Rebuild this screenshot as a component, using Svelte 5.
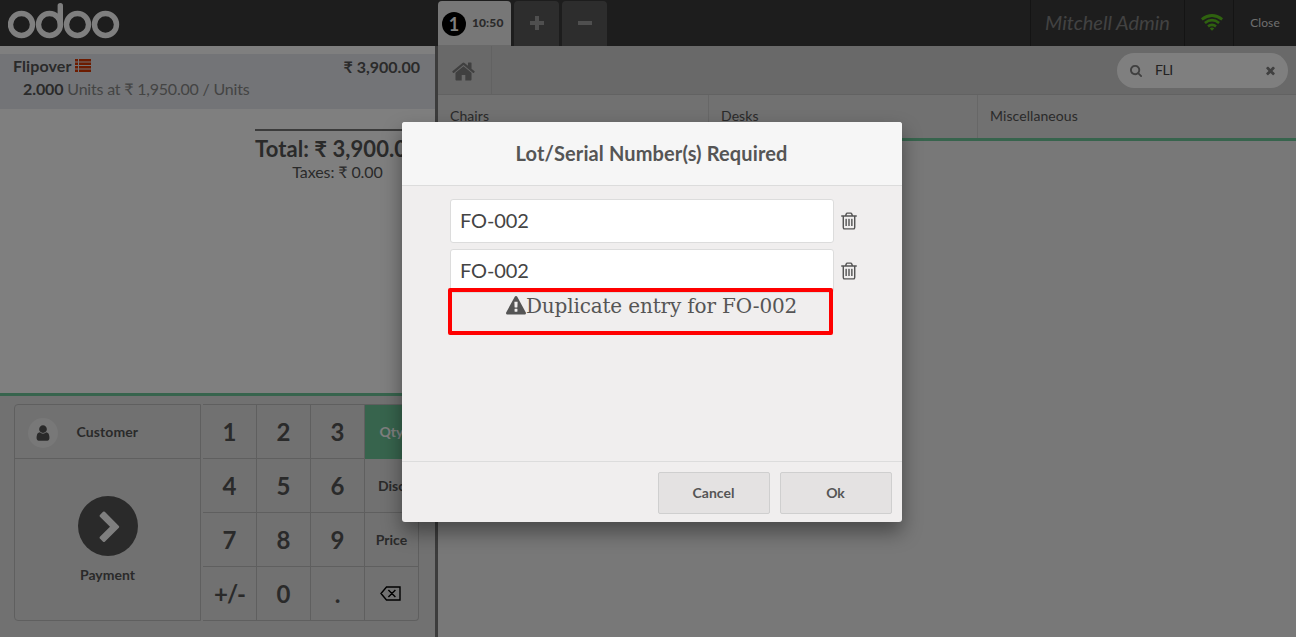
<script>
  const keys = ['1', '2', '3', 'Qty', '4', '5', '6', 'Disc', '7', '8', '9', 'Price', '+/-', '0', '.', 'del'];
  const modes = ['Qty', 'Disc', 'Price'];
  const lots = ['FO-002', 'FO-002'];
  const categories = ['Chairs', 'Desks', 'Miscellaneous'];
</script>

{#snippet trash()}
  <svg class="trash" viewBox="0 0 1792 1792"><path d="M704 736v576q0 14-9 23t-23 9h-64q-14 0-23-9t-9-23v-576q0-14 9-23t23-9h64q14 0 23 9t9 23zm256 0v576q0 14-9 23t-23 9h-64q-14 0-23-9t-9-23v-576q0-14 9-23t23-9h64q14 0 23 9t9 23zm256 0v576q0 14-9 23t-23 9h-64q-14 0-23-9t-9-23v-576q0-14 9-23t23-9h64q14 0 23 9t9 23zm128 724v-948h-896v948q0 22 7 40.5t14.5 27 10.5 8.5h832q3 0 10.5-8.5t14.5-27 7-40.5zm-672-1076h448l-48-117q-7-9-17-11h-317q-10 2-17 11zm928 32v64q0 14-9 23t-23 9h-96v948q0 83-47 143.5t-113 60.5h-832q-66 0-113-58.5t-47-141.5v-952h-96q-14 0-23-9t-9-23v-64q0-14 9-23t23-9h309l70-167q15-37 54-63t79-26h320q40 0 79 26t54 63l70 167h309q14 0 23 9t9 23z" /></svg>
{/snippet}

<div class="pos">
  <header class="topbar">
    <div class="brand">
      <svg class="logo" viewBox="0 0 112 36" fill="none" stroke="#fff" stroke-width="5.4">
        <circle cx="13.5" cy="21.5" r="11" />
        <circle cx="41.5" cy="21.5" r="11" />
        <circle cx="69.5" cy="21.5" r="11" />
        <circle cx="97.5" cy="21.5" r="11" />
        <path d="M52.3 21.5V2.8" stroke-linecap="round" />
      </svg>
    </div>
    <div class="tabs">
      <div class="tab current"><span class="seq">1</span><span class="time">10:50</span></div>
      <div class="tab"><svg width="14" height="14"><path d="M5 0h4v5h5v4h-5v5h-4v-5h-5v-4h5z" /></svg></div>
      <div class="tab"><svg width="14" height="14"><path d="M0 5h14v4h-14z" /></svg></div>
    </div>
    <div class="user">Mitchell Admin</div>
    <div class="wifi">
      <svg width="24" height="18" viewBox="0 0 24 18" fill="none" stroke="#5ec41f" stroke-width="2.7">
        <path d="M1.8 5.4Q12-2.4 22.2 5.4M4.9 9Q12 3.4 19.1 9M8 12.4Q12 9.4 16 12.4" />
        <path d="M9.8 14.4Q12 12.8 14.2 14.4L12 16.8z" fill="#5ec41f" stroke="none" />
      </svg>
    </div>
    <div class="close">Close</div>
  </header>

  <div class="main">
    <section class="left">
      <div class="order">
        <div class="line">
          <div class="line-top">
            <b class="product">Flipover<svg width="16" height="13"><path d="M0 0h3v2.5H0zM4 0h12v2.5H4zM0 3.5h3V6H0zM4 3.5h12V6H4zM0 7h3v2.5H0zM4 7h12v2.5H4zM0 10.5h3V13H0zM4 10.5h12V13H4z" /></svg></b>
            <b>₹ 3,900.00</b>
          </div>
          <div class="info"><b>2.000</b> Units at ₹ 1,950.00 / Units</div>
        </div>
        <div class="summary">
          <div class="total">Total: ₹ 3,900.00</div>
          <div class="taxes">Taxes: ₹ 0.00</div>
        </div>
      </div>
      <div class="pads">
        <div class="actions">
          <div class="customer">
            <span class="avatar"><svg width="18" height="18" viewBox="0 0 1792 1792"><path d="M1536 1399q0 109-62.5 187t-150.5 78h-854q-88 0-150.5-78t-62.5-187q0-85 8.5-160.5t31.5-152 58.5-131 94-89 134.5-34.5q131 128 313 128t313-128q76 0 134.5 34.5t94 89 58.5 131 31.5 152 8.5 160.5zm-256-887q0 159-112.5 271.5t-271.5 112.5-271.5-112.5-112.5-271.5 112.5-271.5 271.5-112.5 271.5 112.5 112.5 271.5z" /></svg></span>
            <span class="label">Customer</span>
          </div>
          <div class="payment">
            <span class="go"><svg width="34" height="34" viewBox="0 0 1792 1792"><path d="M1363 877l-742 742q-19 19-45 19t-45-19l-166-166q-19-19-19-45t19-45l531-531-531-531q-19-19-19-45t19-45l166-166q19-19 45-19t45 19l742 742q19 19 19 45t-19 45z" /></svg></span>
            <span>Payment</span>
          </div>
        </div>
        <div class="numpad">
          {#each keys as key}
            <div class="key" class:mode={modes.includes(key)} class:active={key === 'Qty'} class:sign={key === '+/-'}>
              {#if key === 'del'}
                <svg width="21" height="15" viewBox="0 0 21 15" fill="none" stroke="#000" stroke-width="1.4"><path d="M6.5 1H20v13H6.5L1 7.5zM8.4 4l7 7M15.4 4l-7 7" /></svg>
              {:else}{key}{/if}
            </div>
          {/each}
        </div>
      </div>
    </section>

    <section class="right">
      <div class="tools">
        <div class="home"><svg width="25" height="25" viewBox="0 0 1792 1792"><path d="M1472 992v480q0 26-19 45t-45 19h-384v-384h-256v384h-384q-26 0-45-19t-19-45v-480q0-1 .5-3t.5-3l575-474 575 474q1 2 1 6zm223-69l-62 74q-8 9-21 11h-3q-13 0-21-7l-692-577-692 577q-12 8-24 7-13-2-21-11l-62-74q-8-10-7-23.5t11-21.5l719-599q32-26 76-26t76 26l244 204v-195q0-14 9-23t23-9h192q14 0 23 9t9 23v408l219 182q10 8 11 21.5t-7 23.5z" /></svg></div>
        <div class="search">
          <svg width="13" height="13" viewBox="0 0 1792 1792"><path d="M1152 832q0-185-131.5-316.5t-316.5-131.5-316.5 131.5-131.5 316.5 131.5 316.5 316.5 131.5 316.5-131.5 131.5-316.5zm512 832q0 52-38 90t-90 38q-54 0-90-38l-343-342q-179 124-399 124-143 0-273.5-55.5t-225-150-150-225-55.5-273.5 55.5-273.5 150-225 225-150 273.5-55.5 273.5 55.5 225 150 150 225 55.5 273.5q0 220-124 399l343 343q37 37 37 90z" /></svg>
          <span>FLI</span>
          <svg width="13" height="13" viewBox="0 0 1792 1792"><path d="M1490 1322q0 40-28 68l-136 136q-28 28-68 28t-68-28l-294-294-294 294q-28 28-68 28t-68-28l-136-136q-28-28-28-68t28-68l294-294-294-294q-28-28-28-68t28-68l136-136q28-28 68-28t68 28l294 294 294-294q28-28 68-28t68 28l136 136q28 28 28 68t-28 68l-294 294 294 294q28 28 28 68z" /></svg>
        </div>
      </div>
      <div class="categories">
        {#each categories as name}<div class="category">{name}</div>{/each}
      </div>
    </section>
  </div>

  <div class="overlay">
    <div class="popup">
      <div class="title">Lot/Serial Number(s) Required</div>
      <div class="body">
        {#each lots as lot}
          <div class="lot"><div class="field">{lot}</div>{@render trash()}</div>
        {/each}
        <div class="warning">
          <svg width="20" height="20" viewBox="0 0 1792 1792"><path d="M1024 1375v-190q0-14-9.5-23.5t-22.5-9.5h-192q-13 0-22.5 9.5t-9.5 23.5v190q0 14 9.5 23.5t22.5 9.5h192q13 0 22.5-9.5t9.5-23.5zm-2-374l18-459q0-12-10-19-13-11-24-11h-220q-11 0-24 11-10 7-10 21l17 457q0 10 10 16.5t24 6.5h185q14 0 23.5-6.5t10.5-16.5zm-14-934l768 1408q35 63-2 126-17 29-46.5 46t-63.5 17h-1536q-34 0-63.5-17t-46.5-46q-37-63-2-126l768-1408q17-31 47-49t65-18 65 18 47 49z" /></svg>Duplicate entry for FO-002
        </div>
        <div class="highlight"></div>
      </div>
      <div class="footer"><div class="button">Cancel</div><div class="button">Ok</div></div>
    </div>
  </div>
</div>

<style>
  .pos, .pos * { box-sizing: border-box; }
  .pos {
    position: relative; display: flex; flex-direction: column;
    width: 100%; height: 100vh; overflow: hidden;
    font-family: Lato, "Noto Sans", sans-serif; font-size: 16px; color: #555; background: #f0eeee;
  }
  svg { display: block; fill: currentColor; }
  svg[fill="none"] { fill: none; }
  .topbar { display: flex; height: 46px; flex: none; background: #3a3a3a; }
  .brand { width: 438px; padding: 3px 8px; }
  .logo { width: 112px; height: 36px; }
  .tabs { display: flex; flex: 1; gap: 3px; padding-top: 1px; }
  .tab {
    display: flex; align-items: center; justify-content: center; width: 45px; height: 45px;
    border-radius: 4px 4px 0 0; background: #5b5b5b; color: #9e9e9e;
  }
  .tab svg { margin-top: -1px; }
  .tab.current { width: 73px; justify-content: flex-start; padding-left: 4px; background: #eee; color: #555; border-bottom: 1px solid #d3d3d3; }
  .seq { width: 24px; height: 24px; margin-top: 2px; border-radius: 50%; background: #000; color: #fff; font-size: 18px; line-height: 24px; font-weight: 700; text-align: center; }
  .time { margin-left: 6px; font-size: 12px; line-height: 16px; font-weight: 900; letter-spacing: .1px; }
  .user, .wifi, .close { display: flex; align-items: center; justify-content: center; border-left: 1px solid #282828; }
  .user { width: 154px; font-size: 20px; line-height: 24px; padding-bottom: 2px; font-style: italic; color: #858585; }
  .wifi { width: 49px; padding: 0 0 0 5px; }
  .close { width: 63px; padding-bottom: 1px; font-size: 12px; letter-spacing: .1px; color: #ddd; }

  .main { display: flex; flex: 1; min-height: 0; }
  .left { display: flex; flex-direction: column; width: 438px; border-right: 3px solid #797979; }
  .order { flex: 1; padding-top: 8px; background: #fff; }
  .line { height: 55px; padding: 2px 15px 0 13px; background: #e6e8ee; }
  .line-top { display: flex; justify-content: space-between; line-height: 20px; }
  .line-top b + b { padding-top: 1px; }
  .product { display: flex; letter-spacing: .1px; }
  .product svg { margin: 3px 0 0 3px; color: #d93600; }
  .info { padding: 2px 0 0 10px; line-height: 20px; letter-spacing: -.2px; color: #888; }
  .info b { color: #555; letter-spacing: -.1px; }
  .summary { width: 165px; margin: 20px 15px 0 auto; border-top: 2px solid #777; text-align: center; }
  .total { white-space: nowrap; padding-top: 4px; font-size: 22px; line-height: 28px; font-weight: 700; letter-spacing: .06px; }
  .taxes { margin-top: -1px; line-height: 20px; letter-spacing: -.1px; }
  .pads { display: flex; gap: 2px; height: 244px; flex: none; padding: 8px 0 0 14px; border-top: 3px solid #6ec89b; background: #e2e2e2; }
  .actions { width: 187px; height: 217px; border: 1px solid #bfbfbf; border-radius: 4px 0 0 4px; font-size: 14px; font-weight: 700; }
  .customer { display: flex; align-items: center; height: 54px; padding-left: 13px; border-bottom: 1px solid #bfbfbf; }
  .avatar { display: flex; align-items: center; justify-content: center; width: 30px; height: 30px; margin-top: 3px; border-radius: 50%; background: #f0f0f0; }
  .label { margin-left: 18.5px; letter-spacing: .1px; }
  .payment { display: flex; flex-direction: column; align-items: center; padding-top: 37px; }
  .go { display: flex; align-items: center; justify-content: center; width: 60px; height: 60px; margin-bottom: 10px; border-radius: 50%; background: #555; color: #fff; padding: 4px 0 0 4px; }
  .numpad { display: grid; grid-template-columns: repeat(4, 54px); grid-auto-rows: 54px; height: 217px; border-top: 1px solid #bfbfbf; border-radius: 0 0 4px 0; }
  .key { display: flex; align-items: center; justify-content: center; border-right: 1px solid #bfbfbf; border-bottom: 1px solid #bfbfbf; font-size: 24px; font-weight: 700; }
  .key:last-child { border-bottom-right-radius: 4px; padding-right: 2px; }
  .key.mode { font-size: 14px; }
  .key.sign { letter-spacing: -1px; }
  .key.active { background: #6ec89b; border-color: #6ec89b; color: #fff; }

  .right { flex: 1; background: #f1f1f1; }
  .tools { display: flex; align-items: center; justify-content: space-between; height: 49px; padding-right: 8px; background: #d3d3d3; border-bottom: 1px solid #c4c4c4; }
  .home { display: flex; align-items: center; padding: 2px 0 0 13px; width: 54px; height: 48px; border-right: 1px solid #c4c4c4; color: #808080; }
  .search { display: flex; align-items: center; width: 171px; height: 35px; margin-top: 1px; padding: 0 11px 0 13px; border-radius: 18px; background: #fff; color: #808080; font-size: 14px; }
  .search span { flex: 1; padding: 0 0 2px 12px; letter-spacing: -.4px; color: #444; }
  .categories { display: flex; height: 46px; background: #e2e2e2; border-bottom: 3px solid #6ec89b; }
  .category { flex: none; width: 271px; padding-left: 12px; border-right: 1px solid #cfcfcf; font-size: 14px; line-height: 41px; letter-spacing: .08px; }
  .category:nth-child(2) { width: 269px; }
  .category:last-child { flex: 1; border: 0; }

  .overlay { position: absolute; inset: 0; display: flex; justify-content: center; padding: 122px 0 0 8px; background: rgba(0, 0, 0, .5); }
  .popup { display: flex; flex-direction: column; width: 500px; height: 400px; border-radius: 3px; background: #f0eeee; box-shadow: 0 10px 20px rgba(0, 0, 0, .4); }
  .title { height: 64px; padding-right: 1px; border-bottom: 1px solid #dcdcdc; border-radius: 3px 3px 0 0; background: #f6f6f6; font-size: 20px; line-height: 63px; font-weight: 700; letter-spacing: .12px; text-align: center; }
  .body { position: relative; flex: 1; padding: 13px 0 0 48px; }
  .lot { display: flex; align-items: center; height: 44px; margin-bottom: 6px; }
  .field { width: 384px; height: 44px; padding-left: 9px; border: 1px solid #dcdcdc; border-radius: 3px; background: #fff; color: #444; font-size: 20px; line-height: 41px; letter-spacing: -.1px; }
  .trash { width: 20px; height: 20px; margin-left: 4.5px; }
  .warning { display: flex; align-items: center; justify-content: center; width: 403px; height: 28px; margin-top: -7px; font-family: "DejaVu Serif", serif; font-size: 20px; letter-spacing: -.15px; }
  .highlight { position: absolute; left: 46px; top: 102px; width: 385px; height: 47px; border: 4px solid #f00; border-radius: 2px; }
  .footer { display: flex; justify-content: flex-end; gap: 10px; height: 61px; padding: 10px; border-top: 1px solid #dcdcdc; }
  .button { width: 112px; height: 42px; padding-right: 1px; border: 1px solid #cfcfcf; border-radius: 2px; background: #e4e2e2; font-size: 14px; line-height: 39px; font-weight: 700; text-align: center; }
</style>
